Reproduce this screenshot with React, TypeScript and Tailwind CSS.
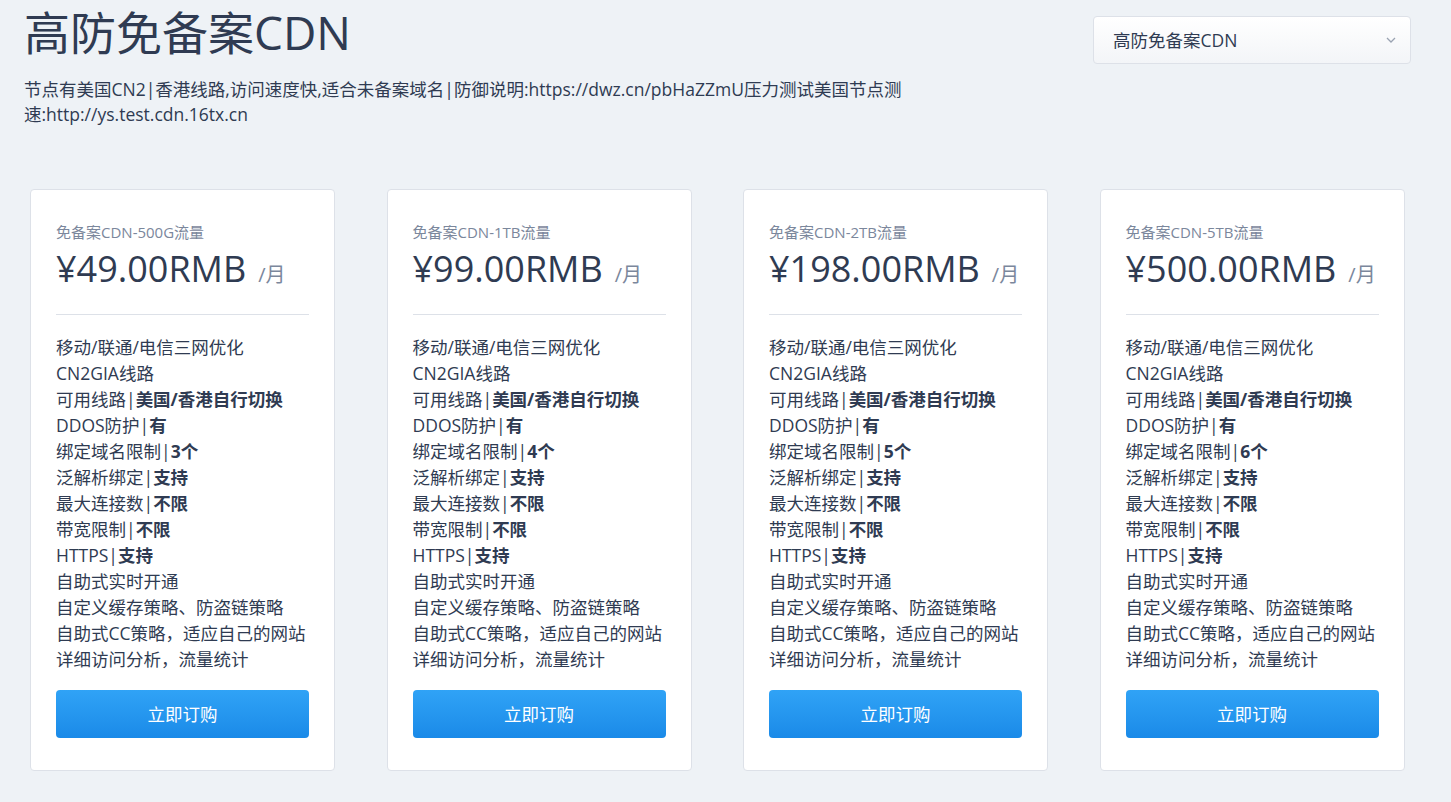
import React from 'react';

const font = { fontFamily: '"Open Sans", "Noto Sans CJK SC", sans-serif' };

type Plan = { name: string; price: string; domains: string };

const plans: Plan[] = [
  { name: '免备案CDN-500G流量', price: '¥49.00RMB', domains: '3个' },
  { name: '免备案CDN-1TB流量', price: '¥99.00RMB', domains: '4个' },
  { name: '免备案CDN-2TB流量', price: '¥198.00RMB', domains: '5个' },
  { name: '免备案CDN-5TB流量', price: '¥500.00RMB', domains: '6个' },
];

const PlanCard: React.FC<{ plan: Plan }> = ({ plan }) => {
  // 每行：普通文字 + 粗体值
  const rows: [string, string][] = [
    ['移动/联通/电信三网优化', ''],
    ['CN2GIA线路', ''],
    ['可用线路|', '美国/香港自行切换'],
    ['DDOS防护|', '有'],
    ['绑定域名限制|', plan.domains],
    ['泛解析绑定|', '支持'],
    ['最大连接数|', '不限'],
    ['带宽限制|', '不限'],
    ['HTTPS|', '支持'],
    ['自助式实时开通', ''],
    ['自定义缓存策略、防盗链策略', ''],
    ['自助式CC策略，适应自己的网站', ''],
    ['详细访问分析，流量统计', ''],
  ];

  return (
    <div className="w-[305px] shrink-0 bg-white border border-[#dde1e8] rounded-[4px] px-[25px] pt-[33px] pb-[32px]">
      <div className="text-[15px] leading-[18px] text-[#7b879c]">{plan.name}</div>
      <div className="flex items-baseline mt-[8px] h-[40px]">
        <span className="text-[36px] leading-[40px] text-[#2f3b52]">{plan.price}</span>
        <span className="text-[20px] text-[#7b879c] ml-[12px]">/月</span>
      </div>
      <div className="border-t border-[#dde1e8] mt-[25px] mb-[19px]" />
      <ul className="text-[17.5px] leading-[26px] text-[#2f3b52]">
        {rows.map(([a, b], i) => (
          <li key={i} className="whitespace-nowrap">
            {a}
            {b && <b className="font-bold">{b}</b>}
          </li>
        ))}
      </ul>
      <button className="mt-[18px] w-full h-[48px] rounded-[4px] bg-gradient-to-b from-[#30a3f6] to-[#1a8ae8] text-white text-[17.5px]">
        立即订购
      </button>
    </div>
  );
};

const App: React.FC = () => {
  return (
    <div className="min-h-[802px] bg-[#eef2f6] overflow-hidden" style={font}>
      <div className="flex justify-between pl-[24px] pr-[40px] pt-[4px]">
        <div className="w-[900px]">
          <h1 className="text-[46px] leading-[56px] text-[#2f3b52]">高防免备案CDN</h1>
          <p className="mt-[17px] text-[17.5px] leading-[25px] text-[#2f3b52]">
            节点有美国CN2|香港线路,访问速度快,适合未备案域名|防御说明:https://dwz.cn/pbHaZZmU压力测试美国节点测速:http://ys.test.cdn.16tx.cn
          </p>
        </div>
        <div className="mt-[12px] w-[318px] h-[48px] border border-[#dde1e8] rounded-[4px] bg-gradient-to-b from-white to-[#f3f5f8] flex items-center justify-between pl-[19px] pr-[12px]">
          <span className="text-[17.5px] text-[#2f3b52]">高防免备案CDN</span>
          <svg width="14" height="14" viewBox="0 0 14 14" fill="none" stroke="#9aa3b2" strokeWidth="1.3">
            <path d="M3 5l4 4 4-4" />
          </svg>
        </div>
      </div>
      <div className="flex gap-[51.5px] px-[30px] mt-[62px] pb-[30px]">
        {plans.map((p) => (
          <PlanCard key={p.name} plan={p} />
        ))}
      </div>
    </div>
  );
};

export default App;
